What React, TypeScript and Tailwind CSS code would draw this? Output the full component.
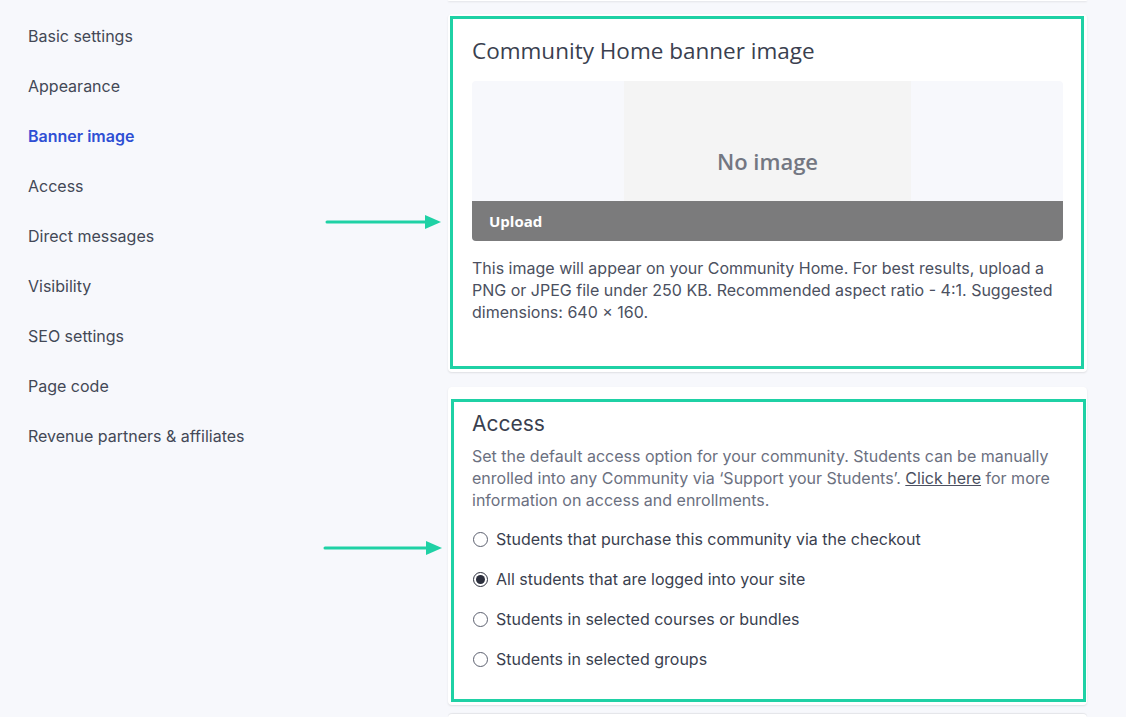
const navItems = [
  "Basic settings",
  "Appearance",
  "Banner image",
  "Access",
  "Direct messages",
  "Visibility",
  "SEO settings",
  "Page code",
  "Revenue partners & affiliates",
];

const accessOptions = [
  { label: "Students that purchase this community via the checkout", checked: false },
  { label: "All students that are logged into your site", checked: true },
  { label: "Students in selected courses or bundles", checked: false },
  { label: "Students in selected groups", checked: false },
];

function Arrow({ width }: { width: number }) {
  return (
    <svg width={width} height="16" viewBox={`0 0 ${width} 16`} className="block">
      <line x1="2" y1="8" x2={width - 14} y2="8" stroke="#1fd1a5" strokeWidth="3" strokeLinecap="round" />
      <polygon points={`${width - 16},1 ${width},8 ${width - 16},15`} fill="#1fd1a5" />
    </svg>
  );
}

function Radio({ checked }: { checked: boolean }) {
  return (
    <span
      className={`flex h-[15px] w-[15px] shrink-0 items-center justify-center rounded-full border ${
        checked ? "border-[#2c2f3d]" : "border-[#5d6170]"
      } bg-white`}
    >
      {checked && <span className="h-[9px] w-[9px] rounded-full bg-[#2c2f3d]" />}
    </span>
  );
}

export default function App() {
  return (
    <div className="min-h-[717px] w-full overflow-hidden bg-[#f7f8fc] font-['Inter',sans-serif] text-[16px] text-[#434856]">
      <div className="flex">
        <aside className="w-[448px] shrink-0 pl-[28px] pt-[25px]">
          <ul className="flex flex-col">
            {navItems.map((item) => (
              <li
                key={item}
                className={`h-[50px] leading-[22px] ${
                  item === "Banner image" ? "font-semibold text-[#2f4fd4]" : ""
                }`}
              >
                {item}
              </li>
            ))}
          </ul>
        </aside>

        <main className="relative w-[639px] shrink-0">
          <div className="h-[1px] rounded-b bg-white shadow-[0_1px_2px_rgba(0,0,0,0.12)]" />

          {/* banner card */}
          <section className="relative mt-[13px] rounded bg-white px-[24px] pb-[49px] pt-[23px] shadow-[0_1px_2px_rgba(0,0,0,0.1)]">
            <div className="pointer-events-none absolute bottom-[3px] left-[2px] right-[3px] top-[2px] border-[3px] border-[#1fd1a5]" />
            <h2 className="font-['Open_Sans',sans-serif] text-[22.5px] font-normal leading-[28px] text-[#3a3f4f]">
              Community Home banner image
            </h2>
            <div className="relative mt-[16px] flex h-[160px] justify-center overflow-hidden rounded bg-[#f7f8fc]">
              <div className="flex w-[287px] items-center justify-center bg-[#f4f4f4]">
                <span className="font-['Open_Sans',sans-serif] text-[22px] font-semibold text-[#737782]">
                  No image
                </span>
              </div>
              <div className="absolute inset-x-0 bottom-0 flex h-[40px] items-center bg-[#7b7b7c] px-[17px] font-['Open_Sans',sans-serif] text-[15px] font-bold text-white">
                Upload
              </div>
            </div>
            <p className="mt-[16px] leading-[22px] text-[#4b5060]">
              This image will appear on your Community Home. For best results, upload a PNG or JPEG file under 250 KB.
              Recommended aspect ratio - 4:1. Suggested dimensions: 640 × 160.
            </p>
          </section>

          {/* access card */}
          <section className="relative mt-[15px] rounded bg-white px-[24px] pb-[35px] pt-[23px] shadow-[0_1px_2px_rgba(0,0,0,0.1)]">
            <div className="pointer-events-none absolute bottom-[3px] left-[3px] right-[1px] top-[12px] border-[3px] border-[#1fd1a5]" />
            <h2 className="text-[21px] font-normal leading-[28px] text-[#3a3f4f]">Access</h2>
            <p className="mt-[7px] leading-[22px] text-[#6b7080]">
              Set the default access option for your community. Students can be manually enrolled into any Community via
              ‘Support your Students’. <span className="text-[#4b5060] underline">Click here</span> for more information on
              access and enrollments.
            </p>
            <div className="mt-[17px] flex flex-col gap-[18px]">
              {accessOptions.map((opt) => (
                <label key={opt.label} className="flex h-[22px] items-center gap-[8px] pl-[1px] text-[#3a3f4f]">
                  <Radio checked={opt.checked} />
                  <span className="leading-[22px]">{opt.label}</span>
                </label>
              ))}
            </div>
          </section>

          <div className="mt-[9px] h-[6px] rounded-t bg-white shadow-[0_-1px_1px_rgba(0,0,0,0.08)]" />

          <div className="absolute left-[-125px] top-[540px]">
            <Arrow width={119} />
          </div>
          <div className="absolute left-[-123px] top-[214px]">
            <Arrow width={116} />
          </div>
        </main>
      </div>
    </div>
  );
}
